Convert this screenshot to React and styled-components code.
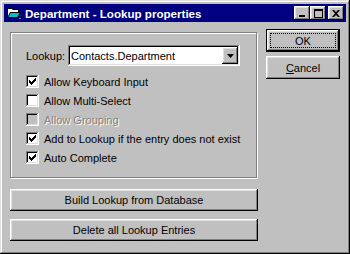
import React from "react";
import styled, { createGlobalStyle, css } from "styled-components";

const GlobalStyle = createGlobalStyle`
  html, body {
    margin: 0;
    padding: 0;
    background: #c0c0c0;
  }
  body {
    font-family: "Liberation Sans", Arial, sans-serif;
    font-size: 11px;
    color: #000;
  }
`;

const raised = css`
  background: #c0c0c0;
  box-shadow: inset -1px -1px #000, inset 1px 1px #fff,
    inset -2px -2px #808080, inset 2px 2px #dfdfdf;
`;

const sunken = css`
  box-shadow: inset -1px -1px #fff, inset 1px 1px #808080,
    inset -2px -2px #dfdfdf, inset 2px 2px #000;
`;

const Window = styled.div`
  box-sizing: border-box;
  width: 350px;
  height: 254px;
  padding: 4px;
  background: #c0c0c0;
  box-shadow: inset -1px -1px #000, inset 1px 1px #dfdfdf,
    inset -2px -2px #808080, inset 2px 2px #fff;
  display: flex;
  flex-direction: column;
`;

const TitleBar = styled.div`
  height: 18px;
  background: #000080;
  display: flex;
  align-items: center;
  padding: 0 2px 0 2px;
`;

const TitleIcon = styled.svg`
  width: 16px;
  height: 16px;
  flex: none;
`;

const TitleText = styled.div`
  color: #fff;
  font-weight: bold;
  font-size: 11.6px;
  margin-left: 3px;
  flex: 1;
  white-space: nowrap;
`;

const TitleButtons = styled.div`
  display: flex;
  align-items: center;
`;

const TitleButton = styled.div`
  ${raised};
  width: 16px;
  height: 14px;
  margin-left: ${(p) => (p.$gap ? "2px" : "0")};
  display: flex;
  align-items: center;
  justify-content: center;
`;

const Client = styled.div`
  flex: 1;
  display: flex;
  padding-left: 6px;
  gap: 9px;
`;

const LeftCol = styled.div`
  width: 247px;
  display: flex;
  flex-direction: column;
  padding-top: 10px;
`;

const GroupBox = styled.div`
  box-sizing: border-box;
  width: 247px;
  height: 146px;
  border: 1px solid #808080;
  box-shadow: inset 1px 1px #fff, 1px 1px #fff;
  padding: 12px 0 0 15px;
`;

const LookupRow = styled.div`
  display: flex;
  align-items: center;
  height: 21px;
  margin-bottom: 6px;
`;

const Label = styled.span`
  width: 42px;
`;

const Combo = styled.div`
  ${sunken};
  box-sizing: border-box;
  width: 172px;
  height: 21px;
  background: #fff;
  display: flex;
  align-items: center;
  padding: 2px 2px 2px 3px;
`;

const ComboText = styled.span`
  flex: 1;
  white-space: nowrap;
`;

const ComboButton = styled.div`
  ${raised};
  width: 16px;
  height: 17px;
  display: flex;
  align-items: center;
  justify-content: center;
`;

const CheckRow = styled.div`
  display: flex;
  align-items: center;
  height: 19px;
  color: ${(p) => (p.$disabled ? "#808080" : "#000")};
  text-shadow: ${(p) => (p.$disabled ? "1px 1px #fff" : "none")};
`;

const CheckBox = styled.div`
  ${sunken};
  box-sizing: border-box;
  width: 13px;
  height: 13px;
  background: ${(p) => (p.$disabled ? "#c0c0c0" : "#fff")};
  margin-right: 5px;
  display: flex;
  align-items: center;
  justify-content: center;
`;

const WideButton = styled.div`
  ${raised};
  box-sizing: border-box;
  width: 248px;
  height: 22px;
  display: flex;
  align-items: center;
  justify-content: center;
  margin-top: ${(p) => p.$top}px;
`;

const RightCol = styled.div`
  display: flex;
  flex-direction: column;
  gap: 4px;
  padding-top: 7px;
`;

const DialogButton = styled.div`
  ${raised};
  box-sizing: border-box;
  width: 74px;
  height: 23px;
  display: flex;
  align-items: center;
  justify-content: center;
  position: relative;
  ${(p) =>
    p.$default &&
    css`
      box-shadow: inset 0 0 0 1px #000, inset -2px -2px #000,
        inset 2px 2px #fff, inset -3px -3px #808080, inset 3px 3px #dfdfdf;
    `}
`;

const FocusRect = styled.div`
  position: absolute;
  inset: 4px;
  border: 1px dotted #000;
`;

const Check = () => (
  <svg width="7" height="7" viewBox="0 0 7 7">
    <path
      d="M0 2h1v1h1v1h1v-1h1v-1h1v-1h1v-1h1v3h-1v1h-1v1h-1v1h-1v1h-1v-1h-1v-1h-1z"
      fill="#000"
    />
  </svg>
);

const options = [
  { label: "Allow Keyboard Input", checked: true },
  { label: "Allow Multi-Select", checked: false },
  { label: "Allow Grouping", checked: false, disabled: true },
  { label: "Add to Lookup if the entry does not exist", checked: true },
  { label: "Auto Complete", checked: true },
];

export default function App() {
  return (
    <>
      <GlobalStyle />
      <Window>
        <TitleBar>
          <TitleIcon viewBox="0 0 16 16">
            <path d="M1 3h6l1 1h5v9H1z" fill="#000" />
            <path d="M2 4h4l1 1h5v7H2z" fill="#fff" />
            <path d="M4 7h11l-3 6H1z" fill="#000" />
            <path d="M4.5 8h9l-2 4H2.5z" fill="#00c0c0" />
            <path d="M13 13h2v1h-2z" fill="#808080" />
          </TitleIcon>
          <TitleText>Department - Lookup properties</TitleText>
          <TitleButtons>
            <TitleButton>
              <svg width="8" height="7" viewBox="0 0 8 7">
                <rect x="1" y="5" width="6" height="2" fill="#000" />
              </svg>
            </TitleButton>
            <TitleButton>
              <svg width="9" height="9" viewBox="0 0 9 9">
                <path d="M0 0h9v9H0z M1 2v6h7V2z" fill="#000" fillRule="evenodd" />
              </svg>
            </TitleButton>
            <TitleButton $gap>
              <svg width="8" height="7" viewBox="0 0 8 7">
                <path
                  d="M0 0h2l2 2 2-2h2L5 3.5 8 7H6L4 5 2 7H0l3-3.5z"
                  fill="#000"
                />
              </svg>
            </TitleButton>
          </TitleButtons>
        </TitleBar>
        <Client>
          <LeftCol>
            <GroupBox>
              <LookupRow>
                <Label>Lookup:</Label>
                <Combo>
                  <ComboText>Contacts.Department</ComboText>
                  <ComboButton>
                    <svg width="7" height="4" viewBox="0 0 7 4">
                      <path d="M0 0h7L3.5 4z" fill="#000" />
                    </svg>
                  </ComboButton>
                </Combo>
              </LookupRow>
              {options.map((o) => (
                <CheckRow key={o.label} $disabled={o.disabled}>
                  <CheckBox $disabled={o.disabled}>
                    {o.checked && <Check />}
                  </CheckBox>
                  {o.label}
                </CheckRow>
              ))}
            </GroupBox>
            <WideButton $top={11}>Build Lookup from Database</WideButton>
            <WideButton $top={8}>Delete all Lookup Entries</WideButton>
          </LeftCol>
          <RightCol>
            <DialogButton $default>
              <FocusRect />
              OK
            </DialogButton>
            <DialogButton>
              <span>
                <u>C</u>ancel
              </span>
            </DialogButton>
          </RightCol>
        </Client>
      </Window>
    </>
  );
}
